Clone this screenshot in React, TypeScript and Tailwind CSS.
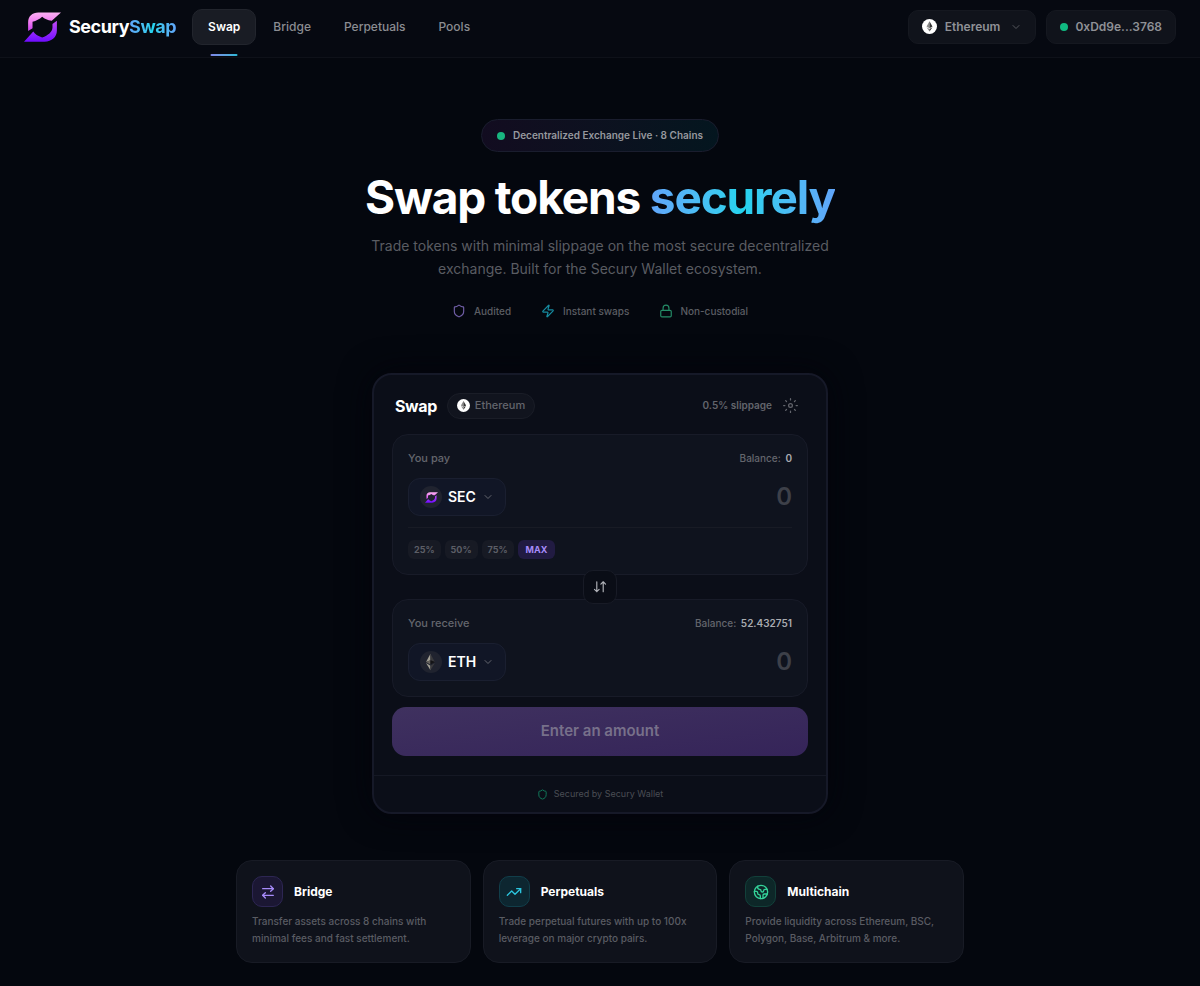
import React, { useState } from 'react';
import { ArrowRightLeft, ChevronDown, Earth, Lock, Shield, TrendingUp, Zap } from 'lucide-react';

type IconProps = { className?: string };

function LogoMark({ className, id }: IconProps & { id: string }) {
  return (
    <svg viewBox="0 0 36 29" className={className} aria-hidden="true">
      <defs>
        <linearGradient id={`${id}-top`} x1="0" y1="0" x2="0" y2="1">
          <stop offset="0" stopColor="#fbb0f2" />
          <stop offset="0.5" stopColor="#f07df0" />
          <stop offset="1" stopColor="#c93df0" />
        </linearGradient>
        <linearGradient id={`${id}-bottom`} x1="0" y1="0" x2="0" y2="1">
          <stop offset="0" stopColor="#c44bf5" />
          <stop offset="1" stopColor="#6f0cff" />
        </linearGradient>
      </defs>
      <path
        d="M36 0.3H14C8 0.3 4 4 4 10V18.5L8.3 15.8V9.3C12 8.5 15 7 17.7 4.5C20 6.5 22.8 7.9 27 8.3Z"
        fill={`url(#${id}-top)`}
      />
      <path
        d="M0 28.8H20C27 28.8 32 24.5 32 18V8.3L27.7 11.7V15C27.5 19.5 23.5 22.5 17.7 24.8C13.5 23.3 10.5 21.5 9 18.9Z"
        fill={`url(#${id}-bottom)`}
      />
    </svg>
  );
}

function EthBadge({ className }: IconProps) {
  return (
    <svg viewBox="0 0 16 16" className={className} aria-hidden="true">
      <circle cx="8" cy="8" r="8" fill="#fff" />
      <path d="M8 2.5L4.8 8L8 9.9Z" fill="#8a8a8a" />
      <path d="M8 2.5L11.2 8L8 9.9Z" fill="#343434" />
      <path d="M8 10.6L4.8 8.7L8 13.3Z" fill="#8a8a8a" />
      <path d="M8 10.6L11.2 8.7L8 13.3Z" fill="#2b2b2b" />
    </svg>
  );
}

function EthToken({ className }: IconProps) {
  return (
    <svg viewBox="0 0 20 20" className={className} aria-hidden="true">
      <circle cx="10" cy="10" r="10" fill="#20232f" />
      <path d="M9.5 2.5L5.5 10L9.5 8.3Z" fill="#a3a095" />
      <path d="M9.5 2.5L13.5 10L9.5 8.3Z" fill="#3a3a3c" />
      <path d="M9.5 8.3L5.5 10L9.5 12.3Z" fill="#66635d" />
      <path d="M9.5 8.3L13.5 10L9.5 12.3Z" fill="#141416" />
      <path d="M9.5 13.3L5.5 11L9.5 17.5Z" fill="#a3a095" />
      <path d="M9.5 13.3L13.5 11L9.5 17.5Z" fill="#3a3a3c" />
    </svg>
  );
}

function LineIcon({ d, className }: IconProps & { d: string }) {
  return (
    <svg
      viewBox="0 0 24 24"
      className={className}
      fill="none"
      stroke="currentColor"
      strokeWidth={2}
      strokeLinecap="round"
      strokeLinejoin="round"
      aria-hidden="true"
    >
      <path d={d} />
    </svg>
  );
}

const GEAR_PATH =
  'M15 12a3 3 0 11-6 0 3 3 0 016 0zM12 1v2M12 21v2M4.22 4.22l1.42 1.42M18.36 18.36l1.42 1.42M1 12h2M21 12h2M4.22 19.78l1.42-1.42M18.36 5.64l1.42-1.42';
const FLIP_PATH = 'M6.5 3v17m0 0l-4-4m4 4l4-4M17.5 20V3m0 0l-4 4m4-4l4 4';

const NAV_LINKS = ['Bridge', 'Perpetuals', 'Pools'];

const FEATURES = [
  {
    title: 'Bridge',
    lines: ['Transfer assets across 8 chains with', 'minimal fees and fast settlement.'],
    Icon: ArrowRightLeft,
    tone: 'border-[#2d2653] bg-[#1b1733] text-[#a78bfa]',
  },
  {
    title: 'Perpetuals',
    lines: ['Trade perpetual futures with up to 100x', 'leverage on major crypto pairs.'],
    Icon: TrendingUp,
    tone: 'border-[#113e4a] bg-[#0d2630] text-[#2cc5de]',
  },
  {
    title: 'Multichain',
    lines: ['Provide liquidity across Ethereum, BSC,', 'Polygon, Base, Arbitrum & more.'],
    Icon: Earth,
    tone: 'border-[#12403a] bg-[#0d2728] text-[#34d399]',
  },
];

function Header() {
  return (
    <header className="flex h-[58px] items-center justify-between border-b border-[#0e1119] bg-[#060911] px-6 pb-1">
      <div className="flex items-center gap-4">
        <a href="#home" className="flex items-center gap-2">
          <LogoMark id="brand" className="h-[30px] w-[37px]" />
          <span className="text-lg font-bold tracking-tight text-white">
            Secury
            <span className="bg-linear-to-r from-[#60a5fa] via-[#22d3ee] to-[#60a5fa] bg-clip-text text-transparent">
              Swap
            </span>
          </span>
        </a>
        <nav className="flex items-center gap-px text-xs font-medium text-[#8b8d92]">
          <a
            href="#swap"
            className="relative flex h-9 items-center rounded-[10px] border border-[#22252d] bg-[#191c24] px-[15px] font-semibold text-white"
          >
            Swap
            <span className="absolute -bottom-3 left-1/2 h-[2px] w-[27px] -translate-x-1/2 rounded-full bg-linear-to-r from-[#7d86e8] to-[#22b8d6]" />
          </a>
          {NAV_LINKS.map((label) => (
            <a key={label} href={`#${label.toLowerCase()}`} className="flex h-9 items-center px-4">
              {label}
            </a>
          ))}
        </nav>
      </div>
      <div className="flex items-center gap-[10px] text-xs font-semibold text-[#8f9196]">
        <button type="button" className="flex h-[34px] items-center gap-2 rounded-[10px] border border-[#151820] bg-[#10131b] px-[13px]">
          <EthBadge className="size-[15px]" />
          Ethereum
          <ChevronDown className="ml-[2px] size-3 text-[#55575d]" strokeWidth={2} />
        </button>
        <button type="button" className="flex h-[34px] items-center gap-[7px] rounded-[10px] border border-[#151820] bg-[#10131b] px-[13px]">
          <span className="size-2 rounded-full bg-[#10b981]" />
          0xDd9e...3768
        </button>
      </div>
    </header>
  );
}

function Hero() {
  return (
    <section className="flex flex-col items-center pt-[61px] text-center">
      <div className="flex h-[33px] items-center gap-2 rounded-full border border-[#1a1d2e] bg-linear-to-r from-[#120c20] to-[#04161f] px-[15px] text-[10px] font-semibold text-[#96989e]">
        <span className="size-2 rounded-full bg-[#18b57f]" />
        Decentralized Exchange Live · 8 Chains
      </div>
      <h1 className="mt-5 text-[46px] leading-[50px] font-bold tracking-tight text-white">
        Swap tokens{' '}
        <span className="bg-linear-to-r from-[#60a5fa] via-[#22d3ee] to-[#60a5fa] bg-clip-text text-transparent">
          securely
        </span>
      </h1>
      <p className="mt-3 text-sm leading-[23px] text-[#5a5c62]">
        Trade tokens with minimal slippage on the most secure decentralized
        <br />
        exchange. Built for the Secury Wallet ecosystem.
      </p>
      <ul className="mt-6 flex items-center gap-[30px] text-[10px] leading-[14px] font-medium text-[#5c5e64]">
        <li className="flex items-center gap-2">
          <Shield className="size-[14px] text-[#705ea6]" />
          Audited
        </li>
        <li className="flex items-center gap-2">
          <Zap className="size-[14px] text-[#168ba0]" />
          Instant swaps
        </li>
        <li className="flex items-center gap-[7px]">
          <Lock className="size-[14px] text-[#258d67]" />
          Non-custodial
        </li>
      </ul>
    </section>
  );
}

interface TokenPanelProps {
  label: string;
  balance: string;
  symbol: string;
  icon: React.ReactNode;
  value: string;
  onChange: (value: string) => void;
  children?: React.ReactNode;
}

function TokenPanel({ label, balance, symbol, icon, value, onChange, children }: TokenPanelProps) {
  const inputId = `amount-${symbol.toLowerCase()}`;

  return (
    <div className="rounded-2xl border border-[#181b28] bg-[#0f131e] p-[15px]">
      <div className="flex h-4 items-center justify-between text-[11px] font-medium text-[#64666d]">
        <label htmlFor={inputId}>{label}</label>
        <span className="text-[10px]">
          Balance: <span className="ml-[2px] font-semibold text-[#a9abb0]">{balance}</span>
        </span>
      </div>
      <div className="mt-3 flex items-center justify-between gap-4">
        <button type="button" className="flex h-[38px] shrink-0 items-center gap-[6px] rounded-xl border border-[#1a1f30] bg-[#111626] px-[11px] text-sm font-semibold text-white">
          {icon}
          {symbol}
          <ChevronDown className="size-3 text-[#64666e]" strokeWidth={2} />
        </button>
        <input
          id={inputId}
          type="text"
          inputMode="decimal"
          placeholder="0"
          value={value}
          onChange={(e) => onChange(e.target.value)}
          className="h-8 min-w-0 flex-1 bg-transparent text-right text-2xl font-semibold text-white outline-none placeholder:text-[#3d4049]"
        />
      </div>
      {children}
    </div>
  );
}

function SwapCard() {
  const [pay, setPay] = useState('');
  const [receive, setReceive] = useState('');

  return (
    <section className="mx-auto mt-[55px] w-full max-w-[456px] rounded-[20px] border-2 border-[#161928] bg-[#0b0e18] shadow-[0_0_32px_#03040b]">
      <div className="px-[18px] pt-[18px] pb-[19px]">
        <div className="flex h-[25px] items-center justify-between px-[3px]">
          <div className="flex items-center gap-[10px]">
            <h2 className="text-base font-bold tracking-tight text-white">Swap</h2>
            <span className="flex h-[26px] items-center gap-[5px] rounded-full border border-[#1a1d27] bg-[#11141e] px-[9px] text-[11px] font-medium text-[#63656c]">
              <EthBadge className="size-[13px]" />
              Ethereum
            </span>
          </div>
          <div className="flex items-center gap-[11px] pr-[7px] text-[10px] font-semibold text-[#63656c]">
            0.5% slippage
            <button type="button" aria-label="Settings">
              <LineIcon d={GEAR_PATH} className="size-[15px]" />
            </button>
          </div>
        </div>
        <div className="mt-4">
          <TokenPanel
            label="You pay"
            balance="0"
            symbol="SEC"
            value={pay}
            onChange={setPay}
            icon={
              <span className="flex size-[22px] items-center justify-center rounded-full bg-[#20232f]">
                <LogoMark id="sec" className="h-[11px] w-[13px]" />
              </span>
            }
          >
            <div className="mt-[11px] flex gap-1 border-t border-[#181b25] pt-3 text-[9px] font-bold text-[#5c5e66]">
              {['25%', '50%', '75%'].map((pct) => (
                <button key={pct} type="button" className="h-[19px] rounded-md bg-[#171a24] px-[6px]">
                  {pct}
                </button>
              ))}
              <button type="button" className="h-[19px] rounded-md bg-[#211b42] px-2 text-[#a78bfa]">
                MAX
              </button>
            </div>
          </TokenPanel>
          <div className="relative z-10 -my-[5px] flex justify-center">
            <button
              type="button"
              aria-label="Switch tokens"
              className="flex size-[34px] items-center justify-center rounded-[10px] border border-[#181b26] bg-[#0a0d16] text-[#b0b2b8]"
            >
              <LineIcon d={FLIP_PATH} className="size-[14px]" />
            </button>
          </div>
          <TokenPanel
            label="You receive"
            balance="52.432751"
            symbol="ETH"
            value={receive}
            onChange={setReceive}
            icon={<EthToken className="size-[22px]" />}
          />
        </div>
        <button
          type="button"
          disabled
          className="mt-[10px] h-[49px] w-full rounded-[14px] bg-linear-to-br from-[#3f315f] to-[#352459] text-[15px] font-semibold text-[#77708a]"
        >
          Enter an amount
        </button>
      </div>
      <div className="flex h-[37px] items-center justify-center gap-[6px] border-t border-[#151824] text-[9px] text-[#4a4d54]">
        <Shield className="size-[11px] text-[#11805f]" />
        Secured by Secury Wallet
      </div>
    </section>
  );
}

export default function App() {
  return (
    <div className="min-h-screen bg-[#04070e] font-['Inter',sans-serif] antialiased">
      <Header />
      <main className="px-6 pb-[22px]">
        <Hero />
        <SwapCard />
        <section className="mx-auto mt-[46px] grid max-w-[728px] grid-cols-3 gap-3">
          {FEATURES.map(({ title, lines, Icon, tone }) => (
            <a key={title} href={`#${title.toLowerCase()}`} className="rounded-2xl border border-[#181b25] bg-[#0f121b] p-[15px]">
              <div className="flex items-center gap-[11px]">
                <span className={`flex size-[31px] items-center justify-center rounded-[10px] border ${tone}`}>
                  <Icon className="size-4" />
                </span>
                <h3 className="text-xs font-bold text-white">{title}</h3>
              </div>
              <p className="mt-[6px] text-[10px] leading-[17px] font-medium text-[#5a5c63]">
                {lines[0]}
                <br />
                {lines[1]}
              </p>
            </a>
          ))}
        </section>
      </main>
    </div>
  );
}
